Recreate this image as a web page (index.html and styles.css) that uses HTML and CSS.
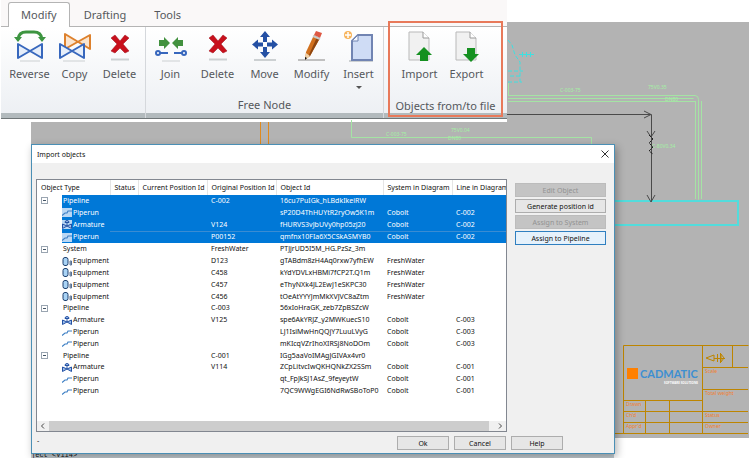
FILE: index.html
```
<!DOCTYPE html>
<html lang="en">

<head>
    <meta charset="UTF-8">
    <meta name="viewport" content="width=device-width, initial-scale=1.0">
    <title>Import objects</title>
    <link rel="stylesheet" href="styles.css">
</head>

<body>
    <!-- diagram in the background -->
    <svg class="drawing" viewBox="0 0 750 458" aria-hidden="true">
        <path d="M31 122H507V22H749V438H614V458H31Z" fill="#b3b3b3" />
        <g fill="none" stroke="#a4e4a4">
            <path d="M351.500 120v17.500h240v8M508.500 83v12" />
            <path d="M508 95.500h187q3.500 0 3.500 4v100M508 98.500h185.500M695.500 101v98M508 101.500h187M701.500 101v98" />
        </g>
        <g class="pipe-tags">
            <text x="386" y="136">C-003-75</text>
            <text x="451" y="132">75V0.04</text>
            <text x="448" y="140">DN80</text>
            <text x="560" y="92">C-003-75</text>
            <text x="648" y="89">75V0.35</text>
            <text x="665" y="101">DN80</text>
            <text x="652" y="148">C-80V0.34</text>
        </g>
        <rect x="600" y="201" width="138" height="24" fill="none" stroke="#52dcdc" stroke-width="2" />
        <g fill="none" stroke="#3fe0e0">
            <path d="M508 40l4 5 3 10 5 7v20M508 71h15M508 82h14M510 76h11" stroke-dasharray="4 2" />
            <path d="M519 54.500h15M522.500 52v5M526.500 52v5M530.500 52v5" />
        </g>
        <g fill="none" stroke="#4a4a4a">
            <path d="M500 114.500h151.500v87M644 111l7 3.500-7 3.500" />
            <path d="M647 195l4 7 4-7M647 131l4 6 4-6" />
            <path d="M649 135l4 4-4 4 4 4-4 4 4 3" stroke="#222" stroke-dasharray="3 1" />
        </g>
        <g fill="none" stroke="#e08a1e">
            <path d="M260.500 122v24M268.500 122v24" />
        </g>
        <g fill="none" stroke="#bd8500">
            <path d="M614 433.500h134M623.500 433V345.500h125M702.500 345v88M732.500 345v22M702 367.500h46M702 389.500h46M623 400.500h79M623 411.500h125M623 422.500h125M645.500 400v33M669.500 400v33" />
            <path d="M714 355l-8 3 8 3zM714 358.500h11M717.500 354v8M720.500 353v10M724 358l-3-4v8z" />
        </g>
        <g class="stamp-labels">
            <text x="705" y="373">Scale</text>
            <text x="705" y="395">Total weight</text>
            <text x="626" y="406">Drawn</text>
            <text x="626" y="417">Ch&#39;d</text>
            <text x="626" y="428">Appr&#39;d</text>
            <text x="705" y="417">Status</text>
            <text x="705" y="428">Owner</text>
        </g>
        <rect x="627" y="368" width="11" height="11" fill="#ff8000" />
        <text class="stamp-logo" x="640" y="378">CADMATIC</text>
        <text class="stamp-sub" x="664" y="384">SOFTWARE SOLUTIONS</text>
    </svg>

    <!-- shared icons -->
    <svg class="sprite" aria-hidden="true">
        <symbol id="i-delete" viewBox="0 0 32 32">
            <path d="M7 29.500h18" stroke="#ccd0d2" stroke-width="2" />
            <path d="M7 8l4-3 5 6 5-6 4 3-6 6 6 7-4 2-5-5-5 5-4-2 6-7z" fill="#c8101c" stroke="#9d0c16" stroke-width=".5" />
        </symbol>
        <symbol id="i-run" viewBox="0 0 10 9">
            <path d="M0 7.500l3-2.500h2l1-2h4" fill="none" stroke="#3d7fc4" stroke-width="1.200" />
        </symbol>
        <symbol id="i-arm" viewBox="0 0 10 9">
            <path d="M.5 4v4.500L5 6l4.500 2.500V4L5 6z" fill="#9dbdea" stroke="#2452a4" />
            <path d="M5 6V3M3 2.500a2 2 0 0 1 4 0z" fill="#9dbdea" stroke="#2452a4" />
        </symbol>
        <symbol id="i-equip" viewBox="0 0 10 9">
            <rect x="1" y=".5" width="5" height="8" rx="2" fill="#a9d3f5" stroke="#1c3f6e" />
            <path d="M8 4h1.500v4H8zM8 6h1.500" fill="none" stroke="#1c3f6e" stroke-width=".7" />
        </symbol>
    </svg>

    <header class="ribbon">
        <nav class="tabs">
            <a class="tab active" href="#modify">Modify</a>
            <a class="tab" href="#drafting">Drafting</a>
            <a class="tab" href="#tools">Tools</a>
        </nav>
        <div class="groups">
            <section class="group group-edit">
                <div class="tools">
                    <button class="tool">
                        <svg viewBox="0 0 32 32">
                            <path d="M6 31h20" stroke="#ccd0d2" />
                            <path d="M4 9Q5 2 12 2h8q7 0 8 7" fill="none" stroke="#3c9440" stroke-width="3" />
                            <path d="M0 7h8l-4 5zM24 7h8l-4 5z" fill="#3c9440" />
                            <path d="M4 14v14l24-14v14z" fill="#e6eefa" stroke="#3767bd" stroke-width="2" stroke-linejoin="round" />
                        </svg>
                        Reverse
                    </button>
                    <button class="tool">
                        <svg viewBox="0 0 32 32">
                            <path d="M4 31h22" stroke="#ccd0d2" />
                            <path d="M6 4v15L31 5v14z" fill="#fbe5cf" stroke="#dd812d" stroke-width="2" stroke-linejoin="round" />
                            <path d="M1 14v14l24-14v14z" fill="#e6eefa" stroke="#3767bd" stroke-width="2" stroke-linejoin="round" />
                        </svg>
                        Copy
                    </button>
                    <button class="tool"><svg><use href="#i-delete" /></svg>Delete</button>
                </div>
            </section>
            <section class="group">
                <div class="tools">
                    <button class="tool">
                        <svg viewBox="0 0 32 32">
                            <path d="M7 31h18" stroke="#ccd0d2" />
                            <path d="M4 10h5V7l6 6-6 6v-3H4zM28 10h-5V7l-6 6 6 6v-3h5z" fill="#42913f" />
                            <path d="M5 23h8M19 23h8" stroke="#3767bd" stroke-width="2" />
                            <circle cx="3" cy="23" r="2" fill="#fff" stroke="#3767bd" stroke-width="2" />
                            <circle cx="29" cy="23" r="2" fill="#fff" stroke="#3767bd" stroke-width="2" />
                        </svg>
                        Join
                    </button>
                    <button class="tool"><svg><use href="#i-delete" /></svg>Delete</button>
                    <button class="tool">
                        <svg viewBox="0 0 32 32">
                            <path d="M5 30h22" stroke="#ccd0d2" stroke-width="2" />
                            <path d="M16 1l5 6h-3v5h-4V7h-3zM16 28l5-6h-3v-5h-4v5h-3zM3 14.500l6-5v3h5v4H9v3zM29 14.500l-6-5v3h-5v4h5v3z" fill="#2450a4" />
                            <path d="M14 12.500h4v4h-4z" fill="#fff" />
                        </svg>
                        Move
                    </button>
                    <button class="tool">
                        <svg viewBox="0 0 32 32">
                            <path d="M2 30h27" stroke="#c0c0c0" stroke-width="2" />
                            <path d="M18 5l6 3-10 18-5 4 1-8z" fill="#d1701d" />
                            <path d="M21 7l3 1-10 18-2 1z" fill="#8d4611" />
                            <path d="M18 5l2-4 6 2-2 5z" fill="#de5844" />
                            <path d="M17 6l7 3" stroke="#c9c9c9" stroke-width="2" />
                            <path d="M9 30l1-7 4 3z" fill="#f0d2a8" />
                            <path d="M9 30v-3l2 1z" fill="#111" />
                        </svg>
                        Modify
                    </button>
                    <button class="tool">
                        <svg viewBox="0 0 32 32">
                            <path d="M6 31h24" stroke="#ccd0d2" stroke-width="2" />
                            <path d="M15 5h14v25H9V11z" fill="#cfdcf5" stroke="#7184b2" stroke-width="2" />
                            <path d="M15 5v6H9z" fill="#f5f8ff" stroke="#7184b2" />
                            <circle cx="5" cy="5" r="4" fill="#f7b45c" />
                            <path d="M5 2v6M2 5h6" stroke="#fff" stroke-width="1.500" />
                        </svg>
                        Insert
                        <span class="caret"></span>
                    </button>
                </div>
                <h2 class="group-name">Free Node</h2>
            </section>
            <section class="group group-file">
                <div class="tools">
                    <button class="tool">
                        <svg viewBox="0 0 32 32">
                            <path d="M5 2h14l6 6v22H5z" fill="#f1f1f1" stroke="#b9b9b9" />
                            <path d="M19 2v6h6" fill="#fff" stroke="#999" />
                            <path d="M20 17l8 8h-4v6h-8v-6h-4z" fill="#159020" />
                        </svg>
                        Import
                    </button>
                    <button class="tool">
                        <svg viewBox="0 0 32 32">
                            <path d="M5 2h14l6 6v22H5z" fill="#f1f1f1" stroke="#b9b9b9" />
                            <path d="M19 2v6h6" fill="#fff" stroke="#999" />
                            <path d="M20 32l8-8h-4v-6h-8v6h-4z" fill="#159020" />
                        </svg>
                        Export
                    </button>
                </div>
                <h2 class="group-name">Objects from/to file</h2>
            </section>
        </div>
    </header>

    <p class="prompt">ject &lt;V114&gt;</p>

    <main class="dialog">
        <div class="title-bar">
            <h1>Import objects</h1>
            <button class="close" aria-label="Close">
                <svg viewBox="0 0 8 8"><path d="M.5.5l7 7M7.500.5l-7 7" stroke="#333" /></svg>
            </button>
        </div>
        <div class="content">
            <div class="list">
                <table>
                    <colgroup>
                        <col class="c-type">
                        <col class="c-status">
                        <col class="c-pos">
                        <col class="c-pos">
                        <col class="c-id">
                        <col class="c-pos">
                        <col>
                    </colgroup>
                    <thead>
                        <tr>
                            <th>Object Type</th>
                            <th>Status</th>
                            <th>Current Position Id</th>
                            <th>Original Position Id</th>
                            <th>Object Id</th>
                            <th>System in Diagram</th>
                            <th>Line in Diagram</th>
                        </tr>
                    </thead>
                    <tbody id="rows"></tbody>
                </table>
                <div class="scrollbar">
                    <button aria-label="Scroll left"><svg viewBox="0 0 6 6"><path d="M4 .5L1.500 3 4 5.500" /></svg></button>
                    <div class="thumb"></div>
                    <button aria-label="Scroll right"><svg viewBox="0 0 6 6"><path d="M2 .5L4.500 3 2 5.500" /></svg></button>
                </div>
            </div>
            <div class="actions">
                <button class="btn" disabled>Edit Object</button>
                <button class="btn">Generate position id</button>
                <button class="btn" disabled>Assign to System</button>
                <button class="btn focused">Assign to Pipeline</button>
            </div>
        </div>
        <footer class="footer">
            <span class="hint">-</span>
            <button class="btn">Ok</button>
            <button class="btn">Cancel</button>
            <button class="btn">Help</button>
        </footer>
    </main>

    <script src="script.js"></script>
</body>

</html>
```

FILE: styles.css
```
* {
    box-sizing: border-box;
}

body {
    margin: 0;
    min-height: 100vh;
    position: relative;
    overflow: hidden;
    background: #fff;
    font-family: "Noto Sans", "Open Sans", sans-serif;
    font-size: 7px;
    color: #111;
}

button {
    font: inherit;
    color: inherit;
    margin: 0;
    padding: 0;
    border: 0;
    background: none;
}

h1,
h2,
p {
    margin: 0;
    font-weight: normal;
}

.sprite {
    position: absolute;
    width: 0;
    height: 0;
}

/* diagram */
.drawing {
    position: absolute;
    top: 0;
    left: 0;
    width: 100%;
}

.pipe-tags {
    fill: #a4f0a4;
    font-size: 5px;
}

.stamp-labels {
    fill: #f08030;
    font-size: 5px;
}

.stamp-logo {
    fill: #3d8fd1;
    font-size: 11px;
    font-weight: bold;
    font-family: "Lato", sans-serif;
}

.stamp-sub {
    fill: #fff;
    font-size: 3px;
    font-weight: bold;
}

/* ribbon */
.ribbon {
    position: absolute;
    top: 0;
    left: 1px;
    right: 243px;
    background: #faf8f8;
    border-bottom: 1px solid #fff;
    color: #55585c;
    font-size: 11px;
    line-height: 16px;
}

.tabs {
    display: flex;
    padding: 2px 7px 0;
    border-bottom: 1px solid #b4b4b4;
}

.tab {
    height: 24px;
    padding: 4px 12px 0;
    border: 1px solid transparent;
    border-bottom: 0;
    color: inherit;
    text-decoration: none;
}

.tab + .tab {
    padding: 4px 13px 0;
}

.tab.active {
    margin-bottom: -1px;
    height: 25px;
    background: #fff;
    border-color: #b4b4b4;
    border-radius: 3px 3px 0 0;
}

.groups {
    display: flex;
    height: 92px;
    background: linear-gradient(#fff, #eceff3);
    border-bottom: 1px solid #6f7678;
    box-shadow: inset 0 -5px #b2babd;
}

.group {
    display: flex;
    flex-direction: column;
    padding: 3px 1px 5px;
    border-right: 1px solid #d5d8dc;
}

.group-edit {
    padding-left: 6px;
    padding-right: 3px;
}

.tools {
    display: flex;
    flex: 1;
}

.tool {
    display: flex;
    flex-direction: column;
    align-items: center;
    width: 47px;
}

.group-edit .tool {
    width: 45px;
}

.tool svg {
    width: 32px;
    height: 32px;
    margin-bottom: 4px;
}

.caret {
    margin-top: 4px;
    border: 3px solid transparent;
    border-top-color: #555;
    border-bottom: 0;
}

.group-name {
    font-size: 11px;
    line-height: 16px;
    text-align: center;
}

.group-file {
    width: 115px;
    margin: -6px 0 1px 4px;
    padding: 7px 0 1px;
    border: 2px solid #e8795a;
}

.group-file .tools {
    padding-left: 6px;
}

/* command line under the dialog */
.prompt {
    position: absolute;
    left: 31px;
    right: 136px;
    bottom: 0;
    height: 7px;
    background: #c3cdd2;
    font: 7px/8px "Liberation Mono", monospace;
}

/* import dialog */
.dialog {
    position: absolute;
    top: 144px;
    left: 31px;
    right: 135px;
    background: #f0f0f0;
    border: 1px solid #4a8fb5;
    box-shadow: 2px 3px 8px rgba(0, 0, 0, 0.3);
}

.title-bar {
    display: flex;
    align-items: center;
    justify-content: space-between;
    height: 18px;
    padding: 0 5px;
    background: #fff;
}

.title-bar h1 {
    font-size: 7px;
}

.close svg {
    display: block;
    width: 8px;
    height: 8px;
}

.content {
    display: flex;
    gap: 8px;
    padding: 16px 8px 0 4px;
}

.list {
    flex: 1;
    min-width: 0;
    border: 1px solid #828790;
    background: #fff;
    overflow: hidden;
}

table {
    width: 100%;
    height: 217px;
    table-layout: fixed;
    border-collapse: collapse;
    line-height: 10px;
}

.c-type {
    width: 73px;
}

.c-status {
    width: 28px;
}

.c-pos {
    width: 69px;
}

.c-id {
    width: 107px;
}

th,
td {
    padding: 0 0 0 4px;
    text-align: left;
    font-weight: normal;
    white-space: nowrap;
    overflow: hidden;
}

th {
    height: 15px;
    border-right: 1px solid #e5e5e5;
}

th:last-child {
    border-right: 0;
}

.selected td {
    background: #0078d7;
    color: #fff;
}

.selected td:first-child {
    background: linear-gradient(to right, #fff 25px, #0078d7 25px);
}

.current td + td {
    border-top: 1px solid #3a8cd2;
}

.kind {
    display: flex;
    align-items: center;
}

.kind svg {
    width: 10px;
    height: 9px;
    margin: 0 1px 0 21px;
}

.selected .kind svg {
    background: #b9d7f4;
}

.box {
    width: 7px;
    height: 7px;
    margin-right: 15px;
    border: 1px solid #9aa5b1;
    background: linear-gradient(#456, #456) center / 3px 1px no-repeat #fff;
}

.scrollbar {
    display: flex;
    height: 10px;
    margin-top: 24px;
    background: #f0f0f0;
}

.scrollbar button {
    width: 12px;
    display: flex;
    align-items: center;
    justify-content: center;
}

.scrollbar svg {
    width: 6px;
    height: 6px;
    fill: none;
    stroke: #444;
}

.thumb {
    flex: 1;
    margin-right: 5px;
    background: #cdcdcd;
}

.actions {
    display: flex;
    flex-direction: column;
    gap: 2px;
    width: 91px;
    padding-top: 4px;
}

.btn {
    height: 14px;
    background: #e6e6e6;
    border: 1px solid #adadad;
}

.btn:disabled {
    background: #c4c4c4;
    border-color: #bcbcbc;
    color: #929292;
}

.btn.focused {
    background: #e5f1fb;
    border-color: #2f7fc0;
}

.footer {
    display: flex;
    gap: 5px;
    padding: 4px 51px 3px 5px;
}

.footer .btn {
    width: 52px;
}

.hint {
    margin-right: auto;
}
```

FILE: script.js
```
// kind, original position id, object id, system, line, state
const objects = [
    ['Pipeline', 'C-002', '16cu7PuIGk_hLBdkIkeiRW', '', '', 'selected'],
    ['Piperun', '', 'sP20D4ThHUYtR2ryOw5K1m', 'Cobolt', 'C-002', 'selected'],
    ['Armature', 'V124', 'fHURVS3vJbUVy0hp05zJ20', 'Cobolt', 'C-002', 'selected'],
    ['Piperun', 'P00152', 'qmfnx10FIa6X5CSkASMYB0', 'Cobolt', 'C-002', 'selected current'],
    ['System', 'FreshWater', 'PTJjrUD5I5M_HG.PzSz_3m', '', ''],
    ['Equipment', 'D123', 'gTABdm8zH4Aq0rxw7yfhEW', 'FreshWater', ''],
    ['Equipment', 'C458', 'kYdYDVLxHBMi7fCP2T.Q1m', 'FreshWater', ''],
    ['Equipment', 'C457', 'eThyNXk4JL2EwJ1eSKPC30', 'FreshWater', ''],
    ['Equipment', 'C456', 'tOeAtYYYJmMkXVJVC8aZtm', 'FreshWater', ''],
    ['Pipeline', 'C-003', '56xIoHraGK_zeb7ZpBSZcW', '', ''],
    ['Armature', 'V125', 'spe6AkYRJZ_y2MWKuecS10', 'Cobolt', 'C-003'],
    ['Piperun', '', 'LJ1IsiMwHnQQjY7LuuLVyG', 'Cobolt', 'C-003'],
    ['Piperun', '', 'mKIcqVZrIhoXIRSj8NoDOm', 'Cobolt', 'C-003'],
    ['Pipeline', 'C-001', 'IGg5aaVoIMAgJGIVAx4vr0', '', ''],
    ['Armature', 'V114', 'ZCpLitvcIwQKHQNkZX2SSm', 'Cobolt', 'C-001'],
    ['Piperun', '', 'qt_FpJkSJ1AsZ_9feyeytW', 'Cobolt', 'C-001'],
    ['Piperun', '', '7QC9WWgEGI6NdRwSBoToP0', 'Cobolt', 'C-001']
];

const icons = { Piperun: 'i-run', Armature: 'i-arm', Equipment: 'i-equip' };

document.getElementById('rows').innerHTML = objects.map(([kind, pos, id, system, line, state]) => {
    const mark = icons[kind] ? `<svg><use href="#${icons[kind]}" /></svg>` : '<span class="box"></span>';
    return `<tr class="${state || ''}">
        <td><div class="kind">${mark}${kind}</div></td>
        <td></td>
        <td></td>
        <td>${pos}</td>
        <td>${id}</td>
        <td>${system}</td>
        <td>${line}</td>
    </tr>`;
}).join('');
```
